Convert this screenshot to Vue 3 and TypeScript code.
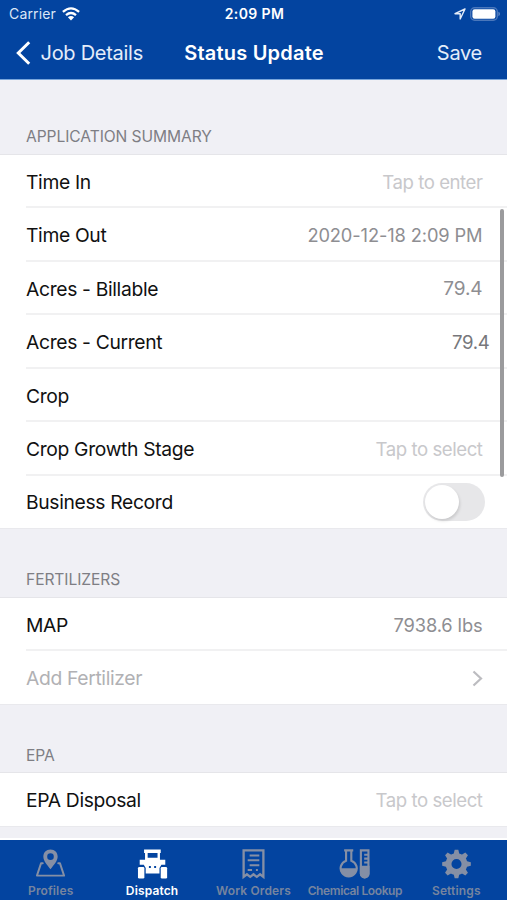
<script setup lang="ts">
type RowKind = 'detail' | 'number' | 'placeholder' | 'editing' | 'toggle' | 'link' | 'empty'

interface Row {
  label: string
  kind: RowKind
  value?: string
}

interface Section {
  title: string
  rows: Row[]
}

interface Tab {
  id: string
  label: string
}

const sections: Section[] = [
  {
    title: 'Application Summary',
    rows: [
      { label: 'Time In', kind: 'placeholder', value: 'Tap to enter' },
      { label: 'Time Out', kind: 'detail', value: '2020-12-18 2:09 PM' },
      { label: 'Acres - Billable', kind: 'number', value: '79.4' },
      { label: 'Acres - Current', kind: 'editing', value: '79.4' },
      { label: 'Crop', kind: 'empty' },
      { label: 'Crop Growth Stage', kind: 'placeholder', value: 'Tap to select' },
      { label: 'Business Record', kind: 'toggle' },
    ],
  },
  {
    title: 'Fertilizers',
    rows: [
      { label: 'MAP', kind: 'detail', value: '7938.6 lbs' },
      { label: 'Add Fertilizer', kind: 'link' },
    ],
  },
  {
    title: 'EPA',
    rows: [{ label: 'EPA Disposal', kind: 'placeholder', value: 'Tap to select' }],
  },
]

const tabs: Tab[] = [
  { id: 'profiles', label: 'Profiles' },
  { id: 'dispatch', label: 'Dispatch' },
  { id: 'orders', label: 'Work Orders' },
  { id: 'chemical', label: 'Chemical Lookup' },
  { id: 'settings', label: 'Settings' },
]

const activeTab = 'dispatch'
const gearTeeth = [0, 45, 90, 135, 180, 225, 270, 315]
</script>

<template>
  <div class="screen">
    <header class="header">
      <div class="status">
        <div class="status-left">
          <span class="carrier">Carrier</span>
          <svg class="wifi" width="18" height="14" viewBox="0 0 18 14" fill="none" stroke="#fff" stroke-width="2.3">
            <path d="M0.9 4.9Q9-2.1 17.1 4.9" />
            <path d="M4 8.2Q9 3.9 14 8.2" />
            <path d="M9 13.4L5.9 10.3Q9 7.7 12.1 10.3Z" fill="#fff" stroke="none" />
          </svg>
        </div>
        <span class="clock">2:09 PM</span>
        <div class="status-right">
          <svg width="12" height="12" viewBox="0 0 12 12" fill="none" stroke="#e6edf8" stroke-width="1.4" stroke-linejoin="round">
            <path d="M11 1L1 5.7H6.2V11Z" />
          </svg>
          <svg width="30" height="14" viewBox="0 0 30 14">
            <rect x="0.7" y="0.7" width="26.6" height="12.6" rx="4" fill="none" stroke="#4a77bb" stroke-width="1.4" />
            <rect x="2.4" y="2.3" width="23" height="9.4" rx="2.2" fill="#fff" />
            <path d="M28.4 4.8Q30 5.4 30 7T28.4 9.2Z" fill="#5f87c4" />
          </svg>
        </div>
      </div>
      <nav class="nav">
        <button class="back" type="button">
          <svg width="15" height="24" viewBox="0 0 15 24" fill="none" stroke="#fff" stroke-width="3">
            <path d="M13.2 1.3L2.3 12L13.2 22.7" />
          </svg>
          <span class="back-label">Job Details</span>
        </button>
        <h1 class="title">Status Update</h1>
        <button class="save" type="button">Save</button>
      </nav>
    </header>

    <main class="content">
      <section v-for="section in sections" :key="section.title" class="section">
        <h2 class="section-title">{{ section.title }}</h2>
        <div class="group">
          <div v-for="row in section.rows" :key="row.label" class="row" :class="`row-${row.kind}`">
            <span class="label">{{ row.label }}</span>
            <span v-if="row.value" class="value">{{ row.value }}</span>
            <span v-if="row.kind === 'toggle'" class="switch"><span class="knob"></span></span>
            <svg v-if="row.kind === 'link'" class="chevron" width="11" height="17" viewBox="0 0 11 17" fill="none" stroke="#bcbcc0" stroke-width="2.2">
              <path d="M1.5 1.5L9 8.5L1.5 15.5" />
            </svg>
          </div>
        </div>
      </section>
      <div class="scrollbar"></div>
    </main>

    <footer class="tabbar">
      <div v-for="tab in tabs" :key="tab.id" class="tab" :class="[tab.id, { active: tab.id === activeTab }]">
        <svg v-if="tab.id === 'profiles'" class="icon" viewBox="0 0 32 32">
          <path fill="currentColor" fill-rule="evenodd" d="M16 1C11.6 1 8.6 4.2 8.6 8.3C8.6 13 12.6 17 16 21.5C19.4 17 23.4 13 23.4 8.3C23.4 4.2 20.4 1 16 1ZM16 5A3.4 3.4 0 1 1 16 11.8A3.4 3.4 0 1 1 16 5Z" />
          <path d="M8 15.3H6.2L2 28H30L25.8 15.3H24" fill="none" stroke="currentColor" stroke-width="2" stroke-linejoin="round" stroke-linecap="round" />
        </svg>
        <svg v-else-if="tab.id === 'dispatch'" class="icon" viewBox="0 0 32 32" fill="currentColor">
          <path fill-rule="evenodd" d="M7.3 1H24.5V4.6H23.7V11.5H29.2V16.8H25.2L23.2 20V25.8H9V20L7 16.8H2.8V11.5H8.3V4.6H7.3ZM11 4.6V9.6H21.2V4.6Z" />
          <rect x="1" y="19" width="6.6" height="12" rx="1.3" />
          <rect x="24.5" y="19" width="6.6" height="12" rx="1.3" />
          <path fill="#0344a0" d="M12.3 18H14.3V20H12.3ZM17.7 18H19.7V20H17.7Z" />
        </svg>
        <svg v-else-if="tab.id === 'orders'" class="icon" viewBox="0 0 32 32" fill="none" stroke="currentColor">
          <path stroke-width="2.4" d="M5.8 29.3V2H26.2V29.3L22.8 26.6L19.4 29.3L16 26.6L12.6 29.3L9.2 26.6Z" />
          <path stroke-width="2.1" d="M12 7.3H22M10 12.2H22M12 17.2H22M10 22.2H14.5M18.5 22.2H20.5" />
        </svg>
        <svg v-else-if="tab.id === 'chemical'" class="icon" viewBox="0 0 32 32" fill="none" stroke="currentColor" stroke-width="2.2">
          <path d="M5.3 2H14.7M7.3 2V12.6A8.3 8.3 0 1 0 12.7 12.6V2" />
          <path fill="currentColor" stroke="none" d="M1.2 20.3H18.8A8.8 8.8 0 0 1 1.2 20.3Z" />
          <path d="M22.6 2H30.4V26A3.9 3.9 0 0 1 22.6 26ZM30 6.5H26M30 10.5H26M30 14.5H26" />
          <path fill="currentColor" d="M22.6 19H30.4V26A3.9 3.9 0 0 1 22.6 26Z" />
        </svg>
        <svg v-else class="icon" viewBox="0 0 32 32">
          <circle cx="16" cy="16" r="8.2" fill="none" stroke="currentColor" stroke-width="6" />
          <path v-for="angle in gearTeeth" :key="angle" fill="currentColor" d="M13 6L14.1 1.2H17.9L19 6Z" :transform="`rotate(${angle} 16 16)`" />
        </svg>
        <span class="tab-label">{{ tab.label }}</span>
      </div>
    </footer>
  </div>
</template>

<style>
body {
  margin: 0;
}
</style>

<style scoped>
.screen {
  display: flex;
  flex-direction: column;
  width: 507px;
  height: 900px;
  overflow: hidden;
  background: #f0f0f5;
  color: #111;
  font-family: Inter, 'Liberation Sans', sans-serif;
}

.header {
  flex: none;
  box-sizing: border-box;
  height: 80px;
  background: #0344a0;
  border-bottom: 1px solid #79a6dc;
  color: #fff;
}

.status {
  display: grid;
  grid-template-columns: 1fr auto 1fr;
  align-items: center;
  height: 27px;
  padding: 0 7px 0 9px;
}

.status-left {
  display: flex;
  align-items: center;
  gap: 6px;
}

.carrier {
  font-size: 14px;
  letter-spacing: 0.15px;
  color: #dce7f7;
}

.clock {
  font-size: 14px;
  font-weight: 600;
  letter-spacing: 0.4px;
}

.status-right {
  display: flex;
  align-items: center;
  justify-content: flex-end;
  gap: 4px;
}

.nav {
  display: grid;
  grid-template-columns: 1fr auto 1fr;
  align-items: center;
  height: 51px;
  padding: 0 15px 0 16px;
}

.back,
.save {
  display: flex;
  align-items: center;
  padding: 0;
  border: 0;
  background: none;
  color: #e4edfa;
  font: inherit;
  font-size: 20px;
  letter-spacing: -0.28px;
}

.back {
  gap: 9.5px;
}

.save {
  justify-content: flex-end;
  padding-right: 10px;
}

.title {
  margin: 0;
  font-size: 20px;
  font-weight: 600;
  letter-spacing: 0.2px;
}

.content {
  position: relative;
  flex: 1;
  min-height: 0;
  overflow: hidden;
}

.section-title {
  box-sizing: border-box;
  height: 69.7px;
  margin: 0;
  padding: 42px 26px 0;
  font-size: 15.6px;
  font-weight: 400;
  line-height: 20px;
  letter-spacing: -0.08px;
  text-transform: uppercase;
  color: #7e7e84;
}

.section:first-child .section-title {
  height: 74.5px;
  padding-top: 47px;
}

.group {
  background: #fff;
  box-shadow: 0 -1px #e5e5e9, 0 1px #e9e9ed;
}

.row {
  display: flex;
  align-items: center;
  justify-content: space-between;
  box-sizing: border-box;
  height: 53.5px;
  margin-left: 26px;
  padding-top: 2.5px;
  padding-right: 24.5px;
  border-bottom: 2px solid #f1f1f2;
  font-size: 19.3px;
  line-height: 24px;
  letter-spacing: -0.34px;
}

.row:last-child {
  height: 52.5px;
  border-bottom: 1px solid transparent;
}

.value {
  color: #8e8e92;
}

.row-detail .value {
  font-size: 18.3px;
  letter-spacing: -0.12px;
}

.row-number .value {
  font-size: 19px;
  letter-spacing: -0.1px;
}

.row-placeholder .value {
  color: #c8c8cb;
  font-size: 18.6px;
  letter-spacing: -0.44px;
}

.row-editing {
  padding-right: 17.5px;
}

.row-editing .value {
  color: #77777b;
  font-size: 18.6px;
}

.row-link .label {
  color: #b1b1b4;
}

.row-toggle {
  padding-top: 2px;
  padding-right: 22px;
}

.switch {
  display: flex;
  align-items: center;
  box-sizing: border-box;
  width: 62px;
  height: 38px;
  padding: 2px;
  border-radius: 19px;
  background: #e7e7e9;
}

.knob {
  width: 34px;
  height: 34px;
  border-radius: 50%;
  background: #fff;
  box-shadow: 1px 2px 3px rgba(0, 0, 0, 0.13);
}

.scrollbar {
  position: absolute;
  top: 129px;
  right: 3px;
  width: 4px;
  height: 268px;
  border-radius: 2px;
  background: #9b9b9d;
}

.tabbar {
  display: grid;
  grid-template-columns: repeat(5, 1fr);
  flex: none;
  box-sizing: border-box;
  height: 62px;
  border-top: 2px solid #fff;
  background: #0344a0;
}

.tab {
  display: flex;
  flex-direction: column;
  align-items: center;
  padding-top: 8px;
  color: #858fa5;
}

.tab.active {
  color: #fff;
}

.icon {
  width: 31px;
  height: 32px;
}

.tab-label {
  margin-top: 3px;
  font-size: 12px;
  font-weight: 600;
  line-height: 16px;
  letter-spacing: 0.14px;
  white-space: nowrap;
  color: #76849f;
}

.active .tab-label {
  color: #fff;
}

.chemical .tab-label {
  letter-spacing: -0.4px;
}
</style>
